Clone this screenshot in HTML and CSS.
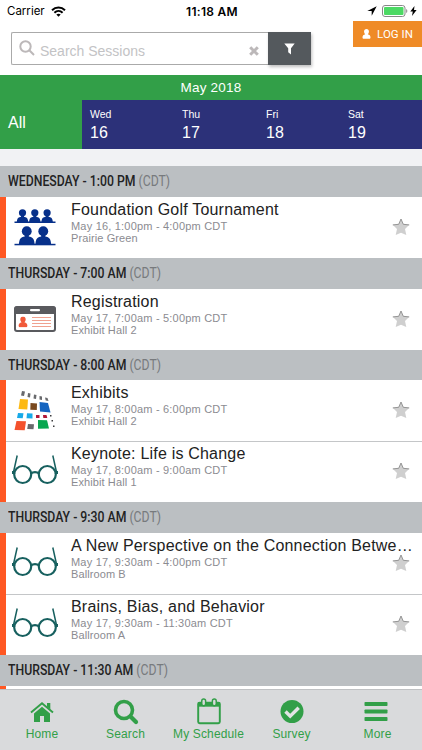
FILE: index.html
```html
<!DOCTYPE html>
<html lang="en">
<head>
    <meta charset="UTF-8">
    <meta name="viewport" content="width=device-width, initial-scale=1.0">
    <title>Sessions</title>
    <link rel="stylesheet" href="styles.css">
</head>
<body>
    <!-- Shared icons -->
    <svg class="icon-defs" width="0" height="0">
        <defs>
            <symbol id="star" viewBox="0 0 18 18">
                <path d="M9 1l2.300 5.200 6 .6-4.300 4.200 1.300 6L9 14.800 3.700 17 5 11 .700 6.800l6-.6z" fill="#cfcfcf"/>
                <path d="M.800 6.900l5.900-.6L9 1l2.300 5.300 5.900.6" fill="none" stroke="#828282" stroke-width=".8"/>
            </symbol>
            <symbol id="glasses" viewBox="0 0 48 32">
                <g fill="none" stroke="#17605f" stroke-width="2.200">
                    <circle cx="11.700" cy="20.500" r="8.500"/>
                    <circle cx="36.300" cy="20.500" r="8.500"/>
                    <path d="M20 19.500c2-1.800 6-1.800 8 0"/>
                    <path d="M2.200 19.500L6.200 1.500M45.800 19.500L41.800 1.500" stroke-width="1.500"/>
                    <path d="M1 18.500h3.200M43.800 18.500H47" stroke-width="3"/>
                </g>
            </symbol>
            <symbol id="person" viewBox="0 0 18 20">
                <path d="M9 0c3 0 4.900 2.200 4.900 5.200 0 2.300-1 4.300-2.400 5.300 3.500.7 5.500 2.700 5.500 6.300 0 1.600-1 2.700-2.500 2.700h-11C2 19.500 1 18.400 1 16.800c0-3.600 2-5.600 5.500-6.300C5.100 9.500 4.100 7.500 4.100 5.200 4.100 2.200 6 0 9 0z"/>
            </symbol>
            <symbol id="bust" viewBox="0 0 16 18">
                <circle cx="8" cy="5" r="4.800"/>
                <path d="M6 8h4v2.300c3.200.5 4.700 1.700 5.200 4.200L15.800 18H.2l.6-3.500C1.300 12 2.800 10.800 6 10.300z"/>
            </symbol>
        </defs>
    </svg>

    <div class="status-bar">
        <div class="carrier">
            Carrier
            <svg width="15" height="11" viewBox="0 0 15 11">
                <g fill="none" stroke="#000" stroke-width="2">
                    <path d="M1 4.200c3.700-3.600 9.300-3.600 13 0"/>
                    <path d="M3.400 6.700c2.400-2.200 5.800-2.200 8.200 0"/>
                </g>
                <path d="M5.300 8.500c1.300-1.100 3.100-1.100 4.400 0L7.500 10.800z"/>
            </svg>
        </div>
        <div class="time">11:18 AM</div>
        <div class="power">
            <svg width="10" height="10" viewBox="0 0 10 10"><path d="M9.700.3L.3 5h4.400v4.700z"/></svg>
            <svg class="battery" width="26" height="12" viewBox="0 0 26 12">
                <rect x=".5" y=".5" width="22.500" height="11" rx="2.500" fill="#fff" stroke="#888"/>
                <rect x="2" y="2" width="19.500" height="8" rx="1" fill="#4cd964"/>
                <path d="M24.200 4v4c1.500-.5 1.500-3.500 0-4z" fill="#888"/>
            </svg>
            <svg width="7" height="10" viewBox="0 0 7 10"><path d="M4.500 0L.3 5.600h2.500L2 10l4.600-5.900H4z"/></svg>
        </div>
    </div>

    <div class="toolbar">
        <div class="search">
            <svg class="search-icon" width="16" height="16" viewBox="0 0 16 16">
                <circle cx="6.500" cy="6.500" r="5.200"/>
                <path d="M10.300 10.300L15 15"/>
            </svg>
            <span class="placeholder">Search Sessions</span>
            <svg class="clear-icon" width="10" height="10" viewBox="0 0 10 10"><path d="M1.200 1.200l7.600 7.600M8.800 1.200L1.200 8.800"/></svg>
        </div>
        <button class="filter-btn" aria-label="Filter">
            <svg width="11" height="12" viewBox="0 0 11 12"><path d="M.3.500h10.400L7 5.200v6.300L4.200 9.300V5.200z"/></svg>
        </button>
        <button class="login-btn">
            <svg width="9" height="10" viewBox="0 0 18 20"><use href="#person"/></svg>
            <span>LOG IN</span>
        </button>
    </div>

    <div class="calendar">
        <div class="month">May 2018</div>
        <div class="days">
            <div class="all">All</div>
            <div class="day"><span>Wed</span><b>16</b></div>
            <div class="day"><span>Thu</span><b>17</b></div>
            <div class="day"><span>Fri</span><b>18</b></div>
            <div class="day"><span>Sat</span><b>19</b></div>
        </div>
    </div>

    <div class="sessions">
        <div class="section-title"><p>WEDNESDAY - 1:00 PM <span>(CDT)</span></p></div>
        <div class="session">
            <div class="picture">
                <svg width="42" height="38" viewBox="0 0 42 38" fill="#07308a">
                    <use href="#bust" x="2" y="1" width="13" height="13.500"/>
                    <use href="#bust" x="14.300" y="1" width="13" height="13.500"/>
                    <use href="#bust" x="26.600" y="1" width="13" height="13.500"/>
                    <rect x=".5" y="13.500" width="41" height="1.500"/>
                    <use href="#bust" x="4.500" y="18" width="16.500" height="18.500"/>
                    <use href="#bust" x="21" y="18" width="16.500" height="18.500"/>
                    <rect x=".5" y="35.800" width="41" height="1.500"/>
                </svg>
            </div>
            <div class="details">
                <h2>Foundation Golf Tournament</h2>
                <p>May 16, 1:00pm - 4:00pm CDT</p>
                <p class="place">Prairie Green</p>
            </div>
            <svg class="star"><use href="#star"/></svg>
        </div>

        <div class="section-title"><p>THURSDAY - 7:00 AM <span>(CDT)</span></p></div>
        <div class="session">
            <div class="picture">
                <svg width="42" height="26" viewBox="0 0 42 26">
                    <rect x="1" y="1" width="40" height="24" rx="2" fill="#fff" stroke="#595a5e" stroke-width="2"/>
                    <path d="M.3 8V3Q.3.300 3 .300h36q2.700 0 2.700 2.700v5z" fill="#595a5e"/>
                    <rect x="16" y="3" width="10" height="2.200" rx="1" fill="#fff"/>
                    <use href="#person" x="4" y="10.500" width="10" height="11" fill="#f15a3a"/>
                    <path d="M18 11.500h19M18 14.500h19M18 17.500h19M18 20.500h19" stroke="#f0a18f"/>
                </svg>
            </div>
            <div class="details">
                <h2>Registration</h2>
                <p>May 17, 7:00am - 5:00pm CDT</p>
                <p class="place">Exhibit Hall 2</p>
            </div>
            <svg class="star"><use href="#star"/></svg>
        </div>

        <div class="section-title"><p>THURSDAY - 8:00 AM <span>(CDT)</span></p></div>
        <div class="session">
            <div class="picture">
                <svg width="42" height="40" viewBox="0 0 42 40">
                    <path d="M8 0l3 .5-1 4.500-3-.5zM14 2l2.500.5-.5 4-2.500-.5zM20 3.500l2.500.5-.5 4-2.500-.5zM25.500 5l2.500.5v3.500l-2.500-.5zM31 6.500l2.500.5 1 3-2.800-.5z" fill="#68696c"/>
                    <path d="M6 8l8 .5-.7 10-8.800-.5z" fill="#fdb913"/>
                    <path d="M16.500 12l6.500.5-.2 6.500-6.500-.3z" fill="#7a4a1f"/>
                    <path d="M25.500 11l8.500 1 2.500 9.500-10.500-1z" fill="#1565c0"/>
                    <path d="M4 22l5.500.3-.8 5-5.700-.3zM13 22.300l5.500.2v5l-6-.2z" fill="#16a9e8"/>
                    <path d="M22 24h3.500v3H22zM29 24h3.500l.8 3h-4z" fill="#b01838"/>
                    <path d="M2.500 30l9.500.3-1.300 9L.5 39z" fill="#f4512c"/>
                    <path d="M14 33l6 .3-.5 5-6.300-.3z" fill="#68696c"/>
                    <path d="M24 29l9 .2 2 8.300-11 .2z" fill="#08a650"/>
                    <path d="M36 24h1.500v1.500H36zM37.500 29H39v1.500h-1.500zM39 34.500h1.500V36H39z" fill="#3b3b3d"/>
                </svg>
            </div>
            <div class="details">
                <h2>Exhibits</h2>
                <p>May 17, 8:00am - 6:00pm CDT</p>
                <p class="place">Exhibit Hall 2</p>
            </div>
            <svg class="star"><use href="#star"/></svg>
        </div>
        <div class="session">
            <div class="picture glasses"><svg width="48" height="32"><use href="#glasses"/></svg></div>
            <div class="details">
                <h2>Keynote: Life is Change</h2>
                <p>May 17, 8:00am - 9:00am CDT</p>
                <p class="place">Exhibit Hall 1</p>
            </div>
            <svg class="star"><use href="#star"/></svg>
        </div>

        <div class="section-title"><p>THURSDAY - 9:30 AM <span>(CDT)</span></p></div>
        <div class="session">
            <div class="picture glasses"><svg width="48" height="32"><use href="#glasses"/></svg></div>
            <div class="details">
                <h2>A New Perspective on the Connection Betwe…</h2>
                <p>May 17, 9:30am - 4:00pm CDT</p>
                <p class="place">Ballroom B</p>
            </div>
            <svg class="star"><use href="#star"/></svg>
        </div>
        <div class="session">
            <div class="picture glasses"><svg width="48" height="32"><use href="#glasses"/></svg></div>
            <div class="details">
                <h2>Brains, Bias, and Behavior</h2>
                <p>May 17, 9:30am - 11:30am CDT</p>
                <p class="place">Ballroom A</p>
            </div>
            <svg class="star"><use href="#star"/></svg>
        </div>

        <div class="section-title"><p>THURSDAY - 11:30 AM <span>(CDT)</span></p></div>
        <div class="session"></div>
    </div>

    <div class="tab-bar">
        <a class="tab">
            <svg width="24" height="26" viewBox="0 0 24 26">
                <path d="M4 14.500l8-6.800 8 6.800V23h-6v-6h-4v6H4z"/>
                <path d="M1 13.500L12 4.300l11 9.200" fill="none" stroke="#329f48" stroke-width="1.900"/>
                <path d="M17 4h3.300v6.500L17 7.700z"/>
            </svg>
            <span>Home</span>
        </a>
        <a class="tab">
            <svg width="26" height="26" viewBox="0 0 26 26" fill="none" stroke="#329f48">
                <circle cx="11" cy="11" r="8.500" stroke-width="3.600"/>
                <path d="M17.500 17.500l5.500 5.500" stroke-width="4.200" stroke-linecap="round"/>
            </svg>
            <span>Search</span>
        </a>
        <a class="tab">
            <svg width="26" height="27" viewBox="0 0 26 28">
                <rect x="1.800" y="4.800" width="22.400" height="21.400" rx="1.500" fill="none" stroke="#329f48" stroke-width="2"/>
                <path d="M1.500 4.500h23V9h-23z"/>
                <rect x="5.500" y="1" width="4" height="7" rx="2" fill="#d9dadc" stroke="#329f48" stroke-width="1.500"/>
                <rect x="16.500" y="1" width="4" height="7" rx="2" fill="#d9dadc" stroke="#329f48" stroke-width="1.500"/>
            </svg>
            <span>My Schedule</span>
        </a>
        <a class="tab">
            <svg width="24" height="26" viewBox="0 0 24 26">
                <circle cx="12" cy="12.500" r="11.500"/>
                <path d="M5.500 12.500l4.700 4.700 8.500-8.500" fill="none" stroke="#e2e4e4" stroke-width="3.400"/>
            </svg>
            <span>Survey</span>
        </a>
        <a class="tab">
            <svg class="menu-icon" width="24" height="24" viewBox="0 0 24 24">
                <rect x=".5" y="1" width="23" height="4" rx=".8"/>
                <rect x=".5" y="8.500" width="23" height="4" rx=".8"/>
                <rect x=".5" y="16" width="23" height="4" rx=".8"/>
            </svg>
            <span>More</span>
        </a>
    </div>
</body>
</html>
```
FILE: styles.css
```css
* {
    margin: 0;
    padding: 0;
    box-sizing: border-box;
}

body {
    width: 422px;
    height: 750px;
    display: flex;
    flex-direction: column;
    overflow: hidden;
    background-color: #fff;
    font-family: "Liberation Sans", Arial, sans-serif;
    color: #222;
}

svg {
    display: block;
    flex-shrink: 0;
}

.icon-defs {
    position: absolute;
}

button {
    border: none;
    font-family: Roboto, sans-serif;
    color: #fff;
}

/* Status bar */
.status-bar {
    height: 21px;
    flex-shrink: 0;
    display: grid;
    grid-template-columns: 1fr auto 1fr;
    align-items: center;
    padding: 1px 5px 0 7px;
    font-family: Inter, sans-serif;
    font-size: 11.5px;
    color: #000;
}

.carrier {
    display: flex;
    align-items: center;
    gap: 6px;
}

.time {
    font-size: 12px;
    font-weight: 600;
    letter-spacing: 0.3px;
}

.power {
    display: flex;
    align-items: center;
    justify-content: flex-end;
    gap: 5px;
}

.battery {
    margin-right: -3px;
}

/* Search row */
.toolbar {
    height: 54px;
    flex-shrink: 0;
    display: flex;
    align-items: flex-start;
    padding-left: 11px;
}

.search {
    width: 257px;
    height: 33px;
    margin-top: 11px;
    display: flex;
    align-items: center;
    padding: 2px 9px 0 7px;
    border: 1px solid #aaa;
    border-right: none;
    border-radius: 2px 0 0 2px;
}

.search-icon,
.clear-icon {
    fill: none;
    stroke: #bcb8b9;
    stroke-width: 2;
}

.search-icon {
    margin-top: -3px;
}

.clear-icon {
    margin-top: 2px;
    stroke-width: 3;
}

.placeholder {
    flex: 1;
    margin: 2px 0 0 5px;
    font-size: 14px;
    color: #c3c3c5;
}

.filter-btn {
    width: 43px;
    height: 33px;
    margin-top: 11px;
    display: flex;
    align-items: center;
    justify-content: center;
    background-color: #54595d;
    box-shadow: 1px 2px 3px rgba(0, 0, 0, 0.25);
    fill: #fff;
}

.login-btn {
    width: 69px;
    height: 26px;
    margin-left: auto;
    display: flex;
    align-items: center;
    justify-content: center;
    gap: 6px;
    background-color: #ef8b27;
    font-size: 11.5px;
    fill: #fff;
}

/* Calendar */
.calendar {
    height: 91px;
    flex-shrink: 0;
    background-color: #f1f2f4;
    color: #fff;
}

.month {
    height: 25px;
    line-height: 26px;
    background-color: #329f48;
    text-align: center;
    font-size: 13.5px;
    letter-spacing: 0.2px;
}

.days {
    height: 49px;
    display: grid;
    grid-template-columns: 82px 92px 84px 82px 82px;
    background-color: #2c3179;
}

.all {
    padding: 14px 8px;
    background-color: #329f48;
    font-size: 16px;
}

.day {
    display: flex;
    flex-direction: column;
    gap: 5px;
    padding: 8px;
    font-size: 10.5px;
    line-height: 12px;
}

.day b {
    font-size: 16px;
    line-height: 16px;
    font-weight: normal;
    letter-spacing: 0.2px;
}

/* Session list */
.sessions {
    height: 522.5px;
    flex-shrink: 0;
    overflow: hidden;
}

.section-title {
    height: 30.8px;
    padding-left: 8px;
    background-color: #bbbfc2;
    font-family: Roboto, sans-serif;
    font-size: 14px;
    font-weight: 500;
    line-height: 31px;
}

.section-title p {
    display: inline-block;
    transform: scaleX(0.875);
    transform-origin: left;
}

.section-title span {
    font-weight: normal;
    color: #777a7d;
}

.session {
    height: 61px;
    display: flex;
    border-left: 6px solid #ff5823;
}

/* Inset line, so the orange edge stays unbroken */
.session + .session {
    box-shadow: inset 0 1px #c4c6c8;
}

.picture {
    width: 58px;
    display: flex;
    align-items: center;
    justify-content: center;
}

.glasses {
    padding-bottom: 3px;
}

.details {
    flex: 1;
    min-width: 0;
    padding: 3px 0 0 7px;
}

.session h2 {
    font-size: 16px;
    line-height: 20px;
    font-weight: normal;
    letter-spacing: 0.2px;
    white-space: nowrap;
}

.session p {
    font-size: 11px;
    line-height: 12px;
    letter-spacing: 0.2px;
    color: #8b8b91;
}

.session .place {
    letter-spacing: 0.1px;
}

.star {
    width: 18px;
    height: 18px;
    margin: 21px 12px 0 -30px;
}

/* Bottom tabs */
.tab-bar {
    flex: 1;
    display: grid;
    grid-template-columns: 84px 83px 83px 83px 89px;
    border-top: 1px solid #bfc1c3;
    background-color: #d9dadc;
}

.tab {
    height: 51px;
    display: flex;
    flex-direction: column;
    align-items: center;
    justify-content: flex-end;
    gap: 2px;
    color: #329f48;
    fill: #329f48;
    font-size: 12px;
    white-space: nowrap;
    letter-spacing: 0.15px;
}

.menu-icon {
    margin-right: 3px;
}
```
